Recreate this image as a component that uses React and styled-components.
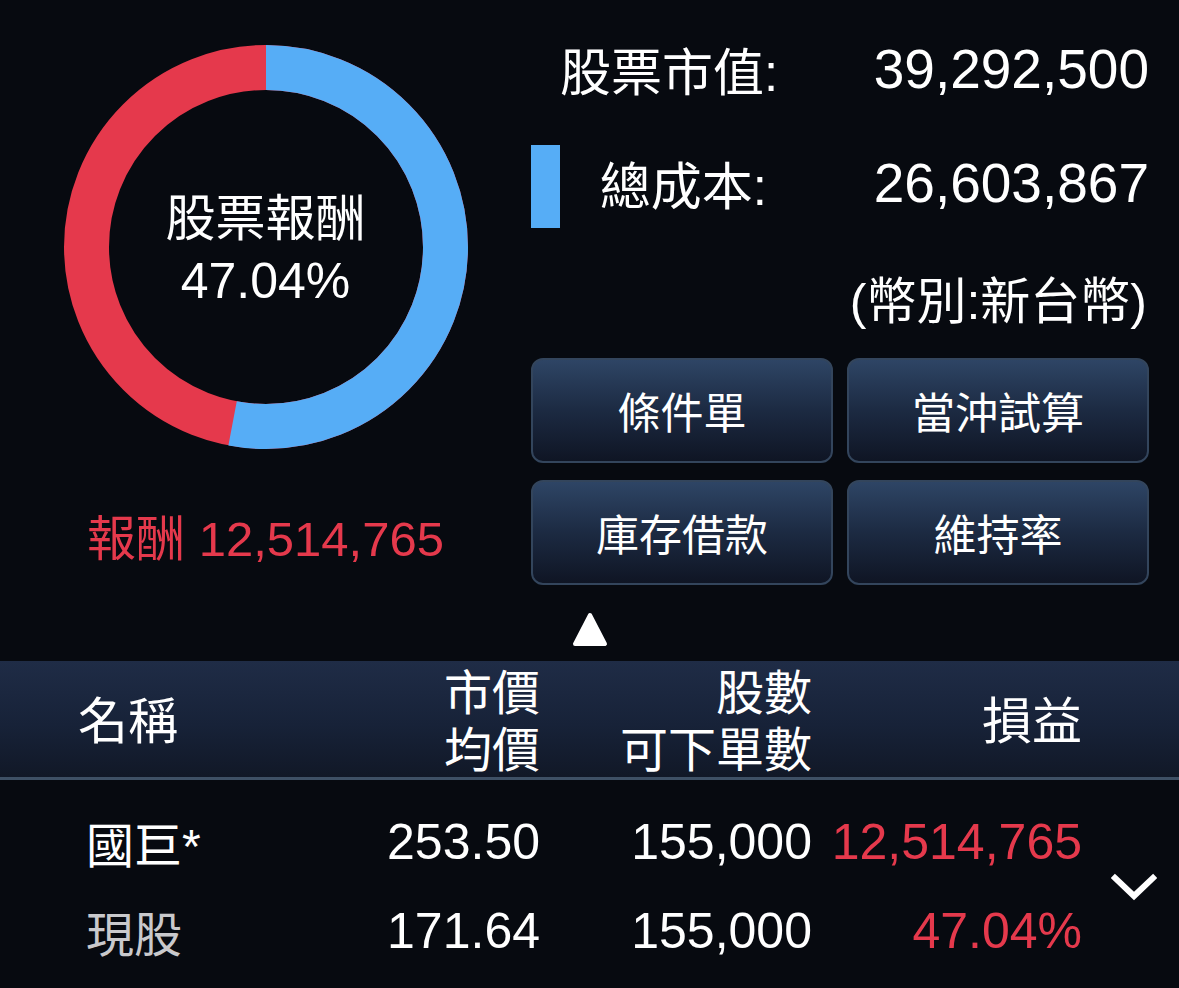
import React from "react";
import styled, { createGlobalStyle } from "styled-components";

const GlobalStyle = createGlobalStyle`
  html, body { margin: 0; padding: 0; background: #070a10; }
  body { font-family: "Liberation Sans", "Noto Sans CJK TC", sans-serif; color: #fff; }
  * { box-sizing: border-box; }
`;

const RED = "#e5394c";
const BLUE = "#56adf6";

const Page = styled.div`
  width: 1179px;
  height: 988px;
  overflow: hidden;
  background: #070a10;
  display: flex;
  flex-direction: column;
`;

const Top = styled.section`
  display: grid;
  grid-template-columns: 531px 1fr;
  padding-right: 31px;
`;

const ChartCol = styled.div`
  display: flex;
  flex-direction: column;
  align-items: center;
  padding-top: 45px;
`;

const DonutWrap = styled.div`
  position: relative;
  width: 404px;
  height: 404px;
`;

const DonutCenter = styled.div`
  position: absolute;
  inset: 0;
  display: flex;
  flex-direction: column;
  align-items: center;
  justify-content: center;
  font-size: 50px;
  line-height: 62px;
  padding-top: 6px;
`;

const ProfitLine = styled.div`
  margin-top: 62px;
  color: ${RED};
  font-size: 49px;
  line-height: 56px;
  white-space: nowrap;
`;

const InfoCol = styled.div`
  display: flex;
  flex-direction: column;
  padding-top: 12px;
`;

const InfoRow = styled.div`
  display: grid;
  grid-template-columns: 29px 207px 1fr;
  align-items: center;
  height: 114px;
`;

const Bar = styled.div`
  width: 29px;
  height: 83px;
  margin-top: 6px;
  background: ${(p) => p.$color || "transparent"};
`;

const Label = styled.div`
  font-size: 51px;
  text-align: right;
  white-space: nowrap;
`;

const Value = styled.div`
  font-size: 55px;
  text-align: right;
  white-space: nowrap;
`;

const Currency = styled.div`
  height: 118px;
  display: flex;
  align-items: center;
  justify-content: flex-end;
  font-size: 50px;
  padding-right: 2px;
  padding-bottom: 4px;
`;

const ButtonGrid = styled.div`
  display: grid;
  grid-template-columns: 302px 302px;
  grid-auto-rows: 105px;
  column-gap: 14px;
  row-gap: 17px;
`;

const ActionButton = styled.button`
  border: 2px solid #33455c;
  border-radius: 12px;
  background: linear-gradient(to bottom, #2e4565 0%, #1c2a42 50%, #0f1524 100%);
  color: #fff;
  font-family: "Liberation Sans", "Noto Sans CJK TC", sans-serif;
  font-size: 43px;
  padding: 0 0 2px;
  cursor: pointer;
`;

const ToggleRow = styled.div`
  height: 76px;
  display: flex;
  justify-content: center;
  padding-top: 27px;
`;

const Header = styled.div`
  display: grid;
  grid-template-columns: 262px 200px 272px 270px;
  align-items: center;
  padding-left: 78px;
  height: 119px;
  padding-top: 4px;
  background: linear-gradient(to bottom, #1f2c46 0%, #172238 55%, #111827 100%);
  border-bottom: 3px solid #3e5065;
`;

const HeadCell = styled.div`
  font-size: ${(p) => (p.$big ? "50px" : "48px")};
  line-height: 57px;
  text-align: ${(p) => (p.$left ? "left" : "right")};
  white-space: nowrap;
`;

const Body = styled.div`
  display: grid;
  grid-template-columns: 262px 192px 272px 270px 97px;
  grid-auto-rows: 89px;
  align-items: center;
  padding-left: 86px;
  padding-top: 17px;
`;

const Cell = styled.div`
  font-size: ${(p) => (p.$cjk ? "48px" : "50px")};
  text-align: ${(p) => (p.$left ? "left" : "right")};
  color: ${(p) => p.$color || "#fff"};
  white-space: nowrap;
`;

const ChevronCell = styled.div`
  grid-column: 5;
  grid-row: 1 / span 2;
  display: flex;
  justify-content: center;
  padding-left: 7px;
  padding-top: 2px;
`;

function Donut({ pct }) {
  const r = 179.5;
  const c = 202;
  const circ = 2 * Math.PI * r;
  const blue = (1 - pct) * circ;
  return (
    <svg width="404" height="404" viewBox="0 0 404 404">
      <g transform={`rotate(-90 ${c} ${c})`}>
        <circle cx={c} cy={c} r={r} fill="none" stroke={RED} strokeWidth="45" />
        <circle
          cx={c}
          cy={c}
          r={r}
          fill="none"
          stroke={BLUE}
          strokeWidth="45"
          strokeDasharray={`${blue} ${circ}`}
        />
      </g>
    </svg>
  );
}

const buttons = ["條件單", "當沖試算", "庫存借款", "維持率"];

export default function App() {
  return (
    <>
      <GlobalStyle />
      <Page>
        <Top>
          <ChartCol>
            <DonutWrap>
              <Donut pct={0.4704} />
              <DonutCenter>
                <div>股票報酬</div>
                <div>47.04%</div>
              </DonutCenter>
            </DonutWrap>
            <ProfitLine>報酬 12,514,765</ProfitLine>
          </ChartCol>
          <InfoCol>
            <InfoRow>
              <Bar />
              <Label>股票市值:</Label>
              <Value>39,292,500</Value>
            </InfoRow>
            <InfoRow>
              <Bar $color={BLUE} />
              <Label>總成本:</Label>
              <Value>26,603,867</Value>
            </InfoRow>
            <Currency>(幣別:新台幣)</Currency>
            <ButtonGrid>
              {buttons.map((b) => (
                <ActionButton key={b}>{b}</ActionButton>
              ))}
            </ButtonGrid>
          </InfoCol>
        </Top>
        <ToggleRow>
          <svg width="36" height="36" viewBox="0 0 36 36">
            <path
              d="M18 3 L33 32 L3 32 Z"
              fill="#fff"
              stroke="#fff"
              strokeWidth="4"
              strokeLinejoin="round"
            />
          </svg>
        </ToggleRow>
        <Header>
          <HeadCell $left $big>名稱</HeadCell>
          <div>
            <HeadCell>市價</HeadCell>
            <HeadCell>均價</HeadCell>
          </div>
          <div>
            <HeadCell>股數</HeadCell>
            <HeadCell>可下單數</HeadCell>
          </div>
          <HeadCell $big>損益</HeadCell>
        </Header>
        <Body>
          <Cell $left $cjk>國巨*</Cell>
          <Cell>253.50</Cell>
          <Cell>155,000</Cell>
          <Cell $color={RED}>12,514,765</Cell>
          <ChevronCell>
            <svg width="46" height="28" viewBox="0 0 46 28">
              <path
                d="M4 5 L23 23 L42 5"
                fill="none"
                stroke="#fff"
                strokeWidth="6"
                strokeLinecap="square"
              />
            </svg>
          </ChevronCell>
          <Cell $left $cjk $color="#c9c9cc">現股</Cell>
          <Cell>171.64</Cell>
          <Cell>155,000</Cell>
          <Cell $color={RED}>47.04%</Cell>
        </Body>
      </Page>
    </>
  );
}
